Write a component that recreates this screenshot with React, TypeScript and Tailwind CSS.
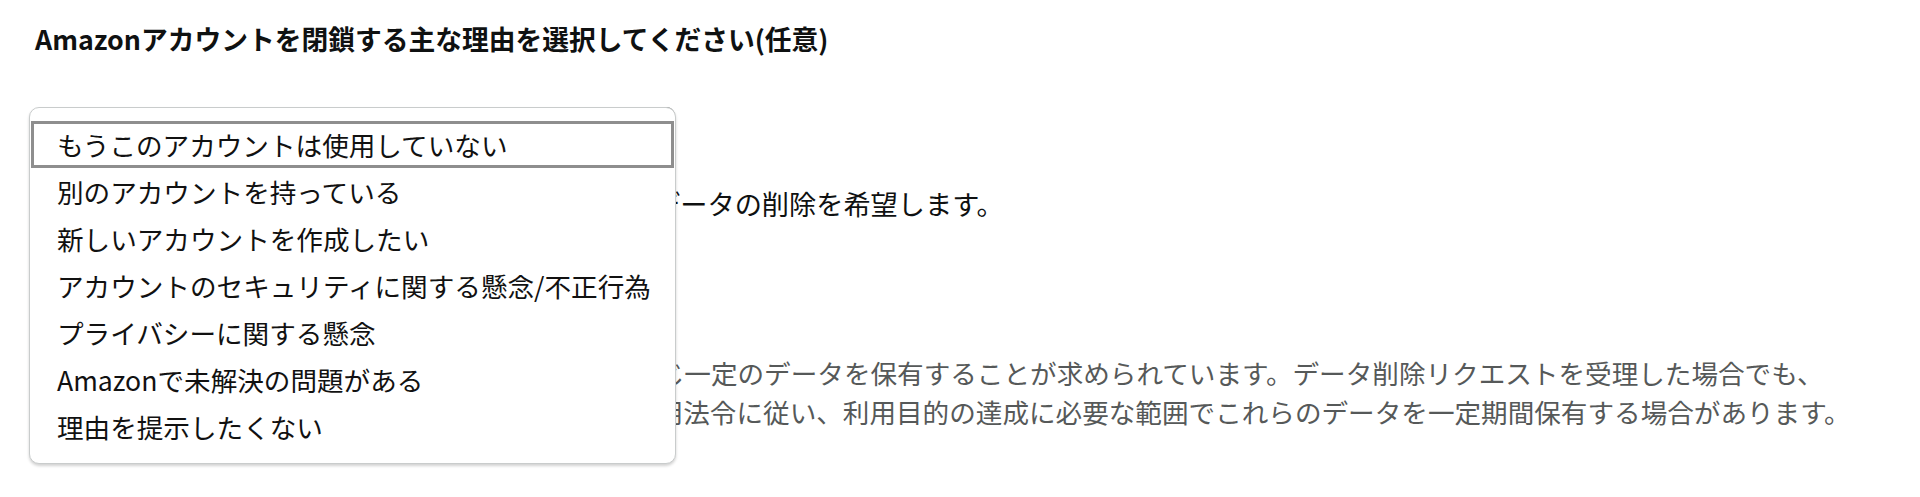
import { useState } from 'react';

const reasons = [
  'もうこのアカウントは使用していない',
  '別のアカウントを持っている',
  '新しいアカウントを作成したい',
  'アカウントのセキュリティに関する懸念/不正行為',
  'プライバシーに関する懸念',
  'Amazonで未解決の問題がある',
  '理由を提示したくない',
];

export default function App() {
  const [active, setActive] = useState(0);

  return (
    <div className="relative h-[497px] w-full overflow-hidden bg-white pl-[35px] pt-[21px] font-['Noto_Sans_CJK_JP',sans-serif] text-[#0f1111]">
      <h2 className="text-[26.75px] font-bold leading-[36px]">
        Amazonアカウントを閉鎖する主な理由を選択してください(任意)
      </h2>

      {/* closed select, covered by its open list */}
      <div className="mt-[50px] flex h-[46px] w-[640px] items-center rounded-[8px] border border-[#888c8c] bg-[#f0f2f2] px-[20px] text-[26px]">
        選択してください
      </div>

      <label className="mt-[32px] flex items-center gap-[9px] text-[27.2px] leading-[36px]">
        <span className="h-[20px] w-[20px] rounded-[3px] border border-[#888c8c]" />
        <span className="whitespace-nowrap">Amazonアカウントを閉鎖し、関連するすべてのデータの削除を希望します。</span>
      </label>

      <p className="mt-[132px] whitespace-nowrap pl-[17px] text-[26.6px] leading-[39px] text-[#565959]">
        Amazonは法律上、税務上または会計上の必要に応じ一定のデータを保有することが求められています。データ削除リクエストを受理した場合でも、
        <br />
        Amazonは税務、会計、紛争解決などの目的で、適用法令に従い、利用目的の達成に必要な範囲でこれらのデータを一定期間保有する場合があります。
      </p>

      {/* open listbox */}
      <ul className="absolute left-[29px] top-[107px] w-[647px] rounded-[10px] border border-[#c9cccc] bg-white px-px py-[13px] shadow-[0_2px_3px_rgba(0,0,0,0.18)]">
        {reasons.map((reason, i) => (
          <li
            key={reason}
            onMouseEnter={() => setActive(i)}
            className={`flex h-[47px] items-center whitespace-nowrap text-[26.6px] text-[#111] ${
              active === i ? 'border-[3px] border-[#8e8e8e] pl-[23px]' : 'pl-[26px]'
            }`}
          >
            {reason}
          </li>
        ))}
      </ul>
    </div>
  );
}
